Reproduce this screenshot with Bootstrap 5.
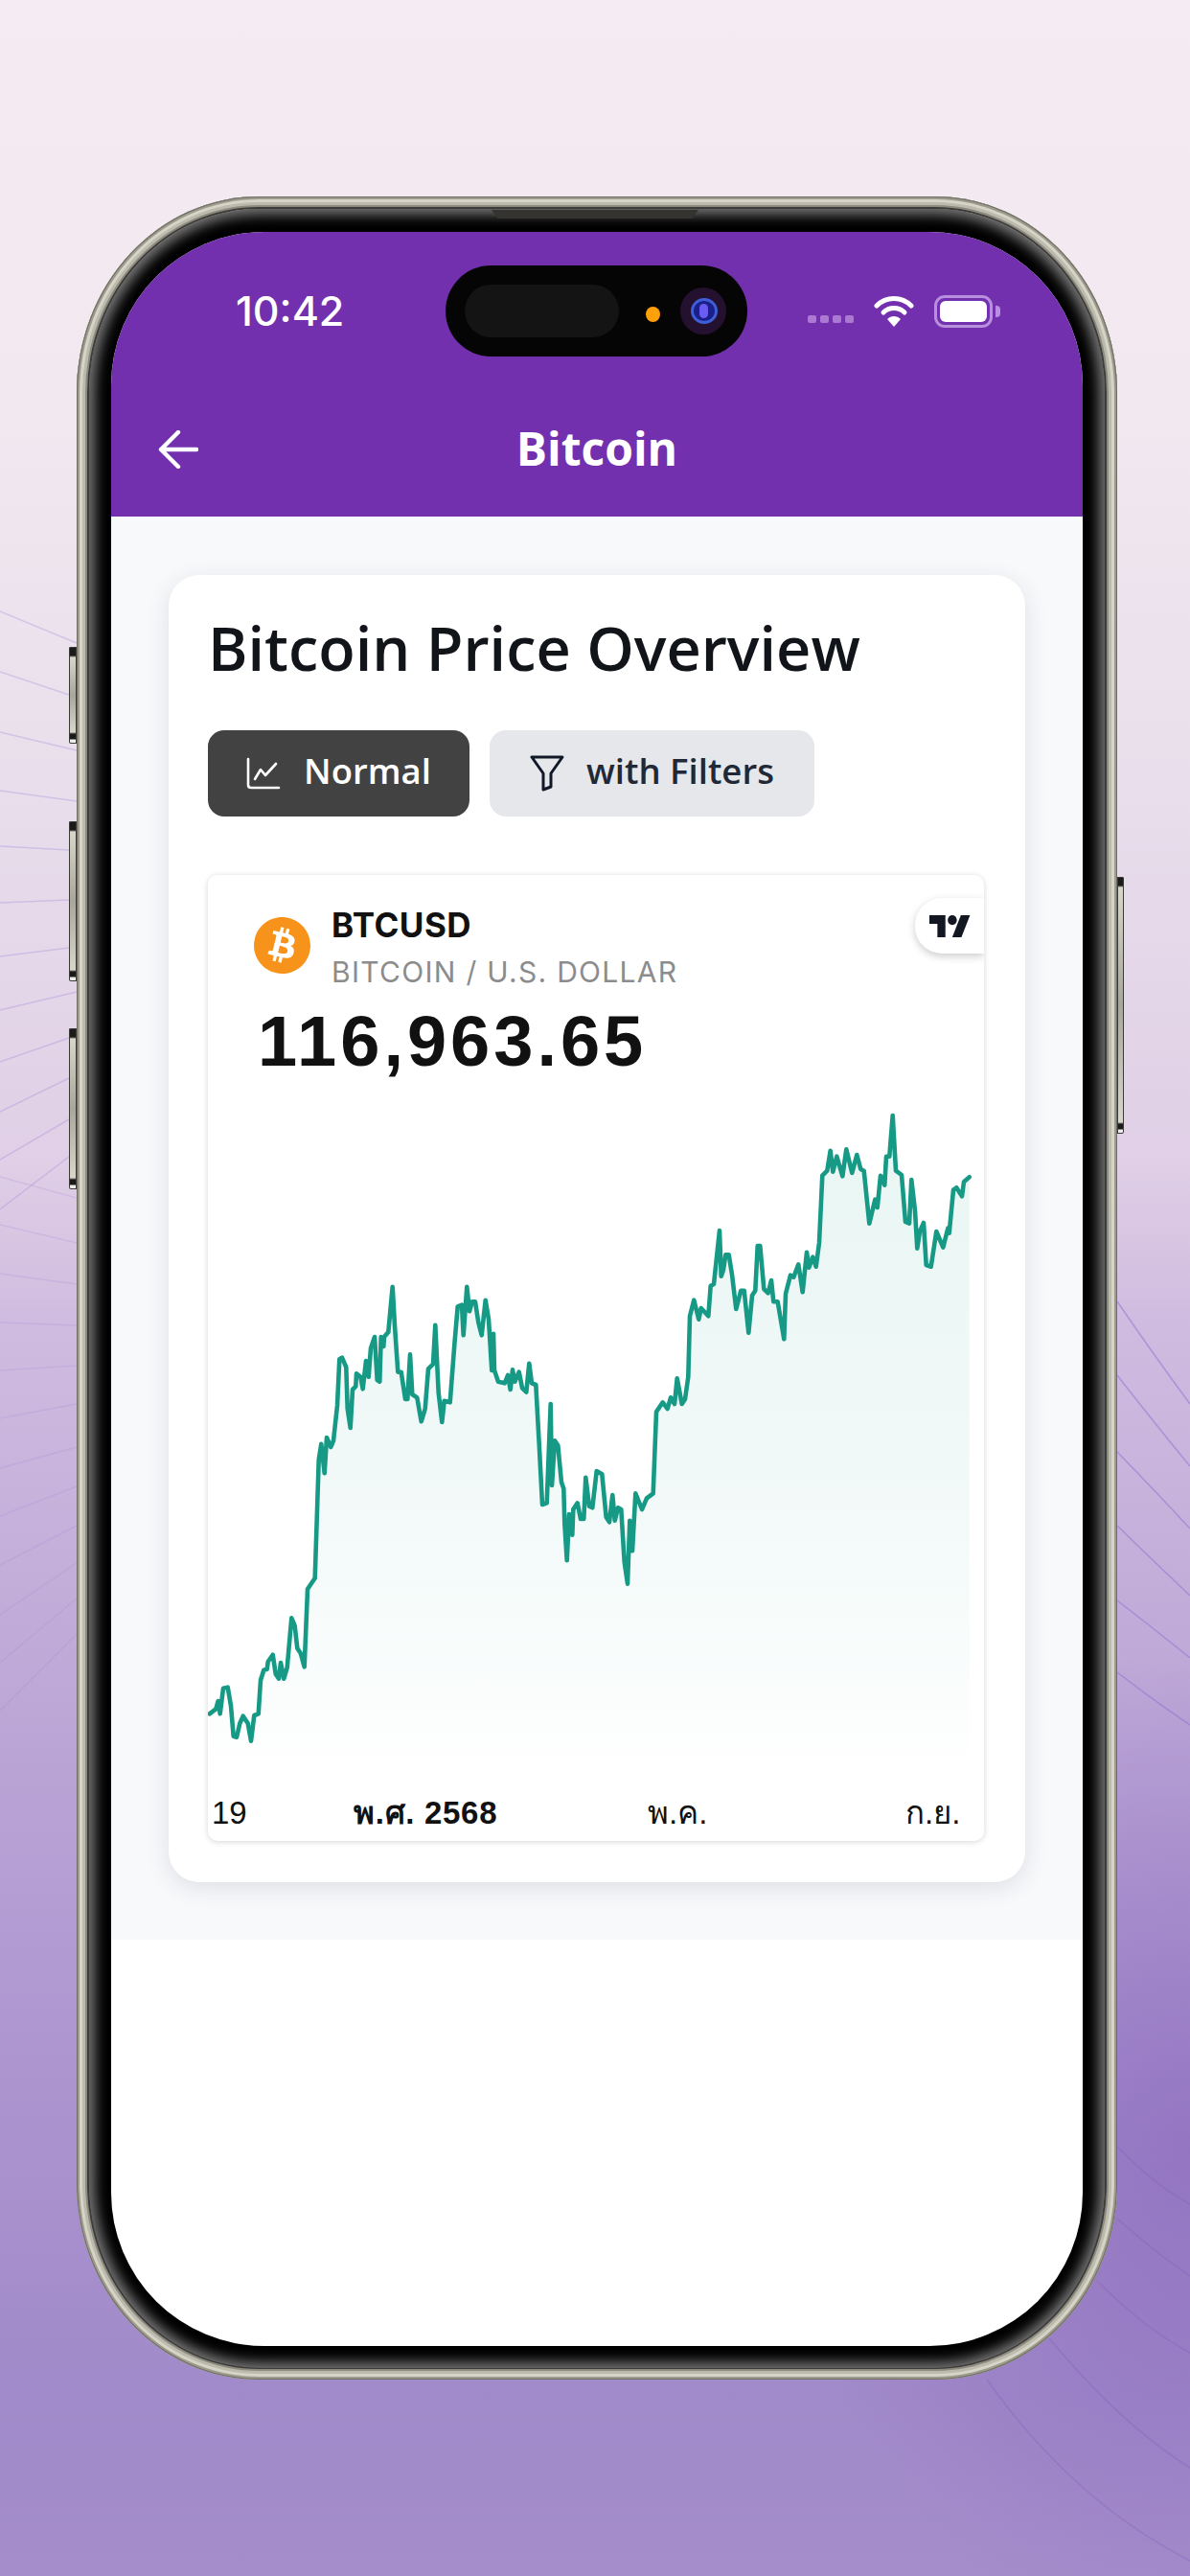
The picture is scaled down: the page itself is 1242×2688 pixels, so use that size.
<!DOCTYPE html>
<html lang="th">
<head>
    <meta charset="UTF-8">
    <meta name="viewport" content="width=device-width, initial-scale=1.0">
    <title>Bitcoin</title>
    <link href="https://cdn.jsdelivr.net/npm/bootstrap@5.3.0/dist/css/bootstrap.min.css" rel="stylesheet">
    <style>
        html, body { margin: 0; width: 1242px; height: 2688px; overflow: hidden; }
        body {
            position: relative;
            font-family: "Open Sans", "Noto Sans", sans-serif;
            background:
                radial-gradient(ellipse 420px 520px at 1242px 2240px, rgba(132, 98, 186, .6), rgba(132, 98, 186, 0)),
                linear-gradient(180deg, #f4ecf2 0%, #f2e9f0 14%, #e9dfec 30%, #e0cfe6 45%, #d0bce0 51%, #b9a3d5 69%, #ab93cf 82%, #a18ac9 93%, #a58dcb 100%);
        }
        .bg-lines { position: absolute; inset: 0; width: 1242px; height: 2688px; }
        .stage { position: relative; padding: 205px 76px 0 80px; }

        /* phone */
        .phone-frame {
            position: relative;
            width: 1086px;
            height: 2278px;
            padding: 13px 13px 12px 13px;
            border-radius: 190px / 205px;
            background: #cfccc0;
            box-shadow: inset 0 0 0 1px #6f6d63, inset 0 0 0 3px #9d9a8e, inset 0 0 0 6px #d6d3c7, inset 0 0 0 9px #bcb9ad, inset 0 0 0 11px #8d8a7f, inset 0 0 0 13px #3c3c3a;
        }
        .phone-bezel {
            position: relative;
            height: 100%;
            padding: 24px 23px 23px 23px;
            background: #000;
            border-radius: 178px / 192px;
            box-shadow: inset 0 0 13px 6px rgba(165, 165, 165, .72);
        }
        .speaker-slot {
            position: absolute;
            top: 1px;
            left: 420px;
            width: 216px;
            height: 9px;
            background: #34332f;
            clip-path: polygon(0 0, 100% 0, 97% 100%, 3% 100%);
        }
        .phone-screen {
            height: 100%;
            background: #fff;
            border-radius: 160px;
            overflow: hidden;
        }
        .side-key {
            position: absolute;
            width: 8px;
            border-radius: 2px 0 0 2px;
            background: linear-gradient(180deg, #1a1a18 0, #1a1a18 9px, #d8d5ca 11px, #a9a69b 50%, #d8d5ca calc(100% - 12px), #1a1a18 calc(100% - 10px), #1a1a18 calc(100% - 5px), #eee calc(100% - 4px));
            box-shadow: inset 0 0 0 1px #3a3a36;
        }
        .key-l1 { left: -8px; top: 470px; height: 101px; }
        .key-l2 { left: -8px; top: 652px; height: 167px; }
        .key-l3 { left: -8px; top: 868px; height: 168px; }
        .key-r1 { right: -7px; width: 7px; top: 710px; height: 268px; border-radius: 0 2px 2px 0; }

        /* app header */
        .app-header { background: #7230ae; color: #fff; padding-top: 35px; height: 297px; }
        .status-row { display: grid; grid-template-columns: 349px 315px 1fr; height: 95px; align-items: center; }
        .status-time { padding-left: 130px; font-family: Inter, "Noto Sans", sans-serif; font-weight: 500; font-size: 43px; line-height: 1; }
        .cam-island { position: relative; height: 95px; background: #050505; border-radius: 48px; }
        .island-pill { position: absolute; left: 20px; top: 20px; width: 161px; height: 55px; border-radius: 28px; background: #141414; }
        .island-dot { position: absolute; left: 209px; top: 43px; width: 15px; height: 16px; border-radius: 50%; background: #ff9f0a; }
        .island-cam { position: absolute; left: 245px; top: 23px; width: 48px; height: 49px; border-radius: 50%; background: #24102f; }
        .island-lens { position: absolute; left: 11px; top: 11px; width: 28px; height: 27px; border-radius: 50%; background: #1b1f8a; border: 3px solid #3f5fd8; }
        .island-lens::after { content: ""; position: absolute; left: 6px; top: 3px; width: 9px; height: 15px; border-radius: 5px; background: #6a5cf0; }
        .status-icons { padding-left: 63px; gap: 21px; }
        .signal-dots { gap: 4px; margin-top: 17px; }
        .signal-dots span { width: 9px; height: 8px; border-radius: 2px; background: #ab79d2; }
        .battery-box { display: block; width: 61px; height: 34px; border: 3px solid #b78fdc; border-radius: 11px; padding: 3px; position: relative; }
        .battery-box span { display: block; height: 100%; background: #fff; border-radius: 6px; }
        .battery-box::after { content: ""; position: absolute; right: -11px; top: 8px; width: 5px; height: 12px; border-radius: 0 4px 4px 0; background: #b78fdc; }
        .nav-row { padding-top: 61px; height: 131px; }
        .nav-back { width: 91px; padding-left: 49px; }
        .nav-arrow { display: block; margin-top: 16px; }
        .nav-title { font-size: 48px; font-weight: 700; line-height: 70px; }

        /* content */
        .app-body { background: #f8f9fb; padding: 61px 60px 60px; }
        .overview-panel {
            height: 1364px;
            padding: 36px 43px 43px 41px;
            border: 0;
            border-radius: 32px;
            background: #fff;
            box-shadow: 0 6px 24px rgba(30, 40, 60, .12);
        }
        .overview-title { margin: 0; font-size: 63px; font-weight: 600; line-height: 80px; color: #111418; }
        .tab-row { margin-top: 46px; gap: 21px; }
        .tab-btn {
            height: 90px;
            padding: 0;
            border: 0;
            border-radius: 17px;
            font-size: 36.5px;
            font-weight: 600;
            line-height: 1;
        }
        .tab-btn span { margin-bottom: 5px; }
        .tab-normal { width: 273px; background: #424242; color: #fff; gap: 24px; }
        .tab-normal:hover { background: #424242; color: #fff; }
        .tab-filter { width: 339px; background: #e5e7eb; color: #1f2937; gap: 23px; }
        .tab-filter:hover { background: #e5e7eb; color: #1f2937; }

        /* tradingview widget */
        .tv-widget {
            position: relative;
            margin-top: 61px;
            height: 1008px;
            padding-top: 32px;
            border: 0;
            border-radius: 10px;
            overflow: hidden;
            background: #fff;
            box-shadow: 0 1px 6px rgba(0, 0, 0, .16);
            font-family: "Liberation Sans", Arial, sans-serif;
        }
        .tv-badge {
            position: absolute;
            top: 24px;
            right: 0;
            width: 72px;
            height: 58px;
            border-radius: 28px 0 0 28px;
            background: #fff;
            box-shadow: 0 3px 8px rgba(0, 0, 0, .2);
        }
        .symbol-row { padding-left: 48px; gap: 22px; }
        .symbol-logo { margin-bottom: 6px; }
        .symbol-name { font-family: Inter, "Liberation Sans", sans-serif; font-size: 35px; font-weight: 700; line-height: 40px; letter-spacing: .5px; color: #111; }
        .symbol-desc { margin-top: 9px; font-family: Inter, "Liberation Sans", sans-serif; font-size: 30px; line-height: 40px; letter-spacing: 1.3px; color: #8c8c8c; }
        .symbol-price { margin: 13px 0 3px; padding-left: 52px; font-size: 74px; font-weight: 700; line-height: 80px; letter-spacing: 4px; color: #111; }
        .price-chart { display: block; width: 810px; height: 791px; }
        .axis-label { font-family: "Liberation Sans", "Noto Sans", sans-serif; font-size: 33px; fill: #111; }
        .axis-year { font-weight: 700; letter-spacing: .7px; }
    </style>
</head>
<body>
    <svg class="bg-lines" viewBox="0 0 1242 2688" fill="none">
        <g stroke="#9a74d8" stroke-opacity=".28" stroke-width="1.5">
            <path d="M0 638 80 671M0 701 72 725M0 764 80 783M0 825 80 836M0 883 72 887M0 942 72 939M0 998 72 989M0 1054 80 1035M0 1108 72 1083M0 1160 72 1125M0 1210 72 1168M0 1262 72 1207"/>
        </g>
        <g stroke="#a884d6" stroke-opacity=".22" stroke-width="1.5">
            <path d="M0 1228 80 1250M0 1278 80 1297M0 1329 80 1340M0 1380 80 1383M0 1430 80 1425M0 1480 80 1465M0 1532 80 1510M0 1582 80 1551M0 1633 80 1592M0 1685 80 1631M0 1735 80 1668M0 1785 80 1705"/>
        </g>
        <g stroke="#8f6cd0" stroke-opacity=".5" stroke-width="1.5">
            <path d="M1166 1358Q1205 1415 1242 1465M1166 1435Q1205 1485 1242 1530M1166 1515Q1205 1555 1242 1595M1166 1592Q1205 1630 1242 1665M1166 1670Q1205 1700 1242 1730M1166 1745Q1205 1775 1242 1800"/>
        </g>
        <g stroke="#7d5ab8" stroke-opacity=".3" stroke-width="1.5">
            <path d="M1166 2240Q1205 2280 1242 2300M1166 2315Q1205 2350 1242 2375M1145 2380Q1195 2430 1242 2455M1095 2440Q1170 2530 1242 2575M1030 2483Q1120 2610 1242 2672"/>
        </g>
    </svg>

    <div class="stage">
        <div class="phone-frame">
            <span class="side-key key-l1"></span>
            <span class="side-key key-l2"></span>
            <span class="side-key key-l3"></span>
            <span class="side-key key-r1"></span>
            <div class="phone-bezel">
                <span class="speaker-slot"></span>
                <div class="phone-screen d-flex flex-column">
                    <header class="app-header">
                        <div class="status-row">
                            <div class="status-time">10:42</div>
                            <div class="cam-island">
                                <span class="island-pill"></span>
                                <span class="island-dot"></span>
                                <span class="island-cam"><span class="island-lens"></span></span>
                            </div>
                            <div class="status-icons d-flex align-items-center">
                                <div class="signal-dots d-flex"><span></span><span></span><span></span><span></span></div>
                                <svg width="42" height="34" viewBox="0 0 42 34" fill="none" stroke="#fff" stroke-width="5" stroke-linecap="round">
                                    <path d="M3 11C13 1 29 1 39 11"/>
                                    <path d="M10 18C16 12 26 12 32 18"/>
                                    <path d="M21 33 14 25C18 21 24 21 28 25Z" fill="#fff" stroke="none"/>
                                </svg>
                                <span class="battery-box"><span></span></span>
                            </div>
                        </div>
                        <div class="nav-row d-flex align-items-start">
                            <div class="nav-back">
                                <svg class="nav-arrow" width="42" height="40" viewBox="0 0 42 40" fill="none" stroke="#fff" stroke-width="4.4" stroke-linecap="round" stroke-linejoin="round">
                                    <path d="M40 20H3M21 2 3 20 21 38"/>
                                </svg>
                            </div>
                            <div class="nav-title flex-grow-1 text-center">Bitcoin</div>
                            <div class="nav-back"></div>
                        </div>
                    </header>

                    <main class="app-body">
                        <section class="overview-panel card">
                            <h1 class="overview-title">Bitcoin Price Overview</h1>
                            <div class="tab-row d-flex">
                                <button type="button" class="tab-btn tab-normal btn d-flex align-items-center justify-content-center">
                                    <svg width="36" height="34" viewBox="0 0 36 34" fill="none" stroke="#fff" stroke-width="2.6" stroke-linecap="round" stroke-linejoin="round">
                                        <path d="M2 2V29Q2 32 5 32H34"/>
                                        <path d="M9 23 15 13 20 19 31 7"/>
                                    </svg>
                                    <span>Normal</span>
                                </button>
                                <button type="button" class="tab-btn tab-filter btn d-flex align-items-center justify-content-center">
                                    <svg width="36" height="38" viewBox="0 0 36 38" fill="none" stroke="#111827" stroke-width="3" stroke-linejoin="round">
                                        <path d="M2 2H34L22 19V33L14 36V19Z"/>
                                    </svg>
                                    <span>with Filters</span>
                                </button>
                            </div>

                            <div class="tv-widget card">
                                <div class="tv-badge d-flex align-items-center justify-content-center">
                                    <svg width="43" height="23" viewBox="0 0 36 18" preserveAspectRatio="none" fill="#131722">
                                        <path d="M14 18H7V7H0V0h14zM28 18h-8l7.5-18h8z"/>
                                        <circle cx="20" cy="4" r="4"/>
                                    </svg>
                                </div>
                                <div class="symbol-row d-flex align-items-center">
                                    <svg class="symbol-logo" width="59" height="59" viewBox="0 0 24 24" fill="#f7931a">
                                        <path d="M23.638 14.904c-1.602 6.43-8.113 10.34-14.542 8.736C2.67 22.05-1.244 15.525.362 9.105 1.962 2.67 8.475-1.243 14.9.358c6.43 1.605 10.342 8.115 8.738 14.548v-.002zm-6.35-4.613c.24-1.59-.974-2.45-2.64-3.03l.54-2.153-1.315-.33-.525 2.107c-.345-.087-.705-.167-1.064-.25l.526-2.127-1.32-.33-.54 2.165c-.285-.067-.565-.132-.84-.2l-1.815-.45-.35 1.407s.975.225.955.236c.535.136.63.486.615.766l-1.477 5.92c-.075.166-.24.406-.614.314.015.02-.96-.24-.96-.24l-.66 1.51 1.71.426.93.242-.54 2.19 1.32.327.54-2.17c.36.1.705.19 1.05.273l-.51 2.154 1.32.33.545-2.19c2.24.427 3.93.257 4.64-1.774.57-1.637-.03-2.58-1.217-3.196.854-.193 1.5-.76 1.68-1.93h.01zm-3.01 4.22c-.404 1.64-3.157.75-4.05.53l.72-2.9c.896.23 3.757.67 3.33 2.37zm.41-4.24c-.37 1.49-2.662.735-3.405.55l.654-2.64c.744.18 3.137.524 2.75 2.084v.006z"/>
                                    </svg>
                                    <div>
                                        <div class="symbol-name">BTCUSD</div>
                                        <div class="symbol-desc">BITCOIN / U.S. DOLLAR</div>
                                    </div>
                                </div>
                                <div class="symbol-price">116,963.65</div>
                                <svg class="price-chart" viewBox="217 1130 810 791">
                                    <defs>
                                        <linearGradient id="areaFade" gradientUnits="userSpaceOnUse" x1="0" y1="1180" x2="0" y2="1860">
                                            <stop offset="0" stop-color="#089981" stop-opacity=".09"/>
                                            <stop offset=".6" stop-color="#089981" stop-opacity=".05"/>
                                            <stop offset="1" stop-color="#089981" stop-opacity="0"/>
                                        </linearGradient>
                                    </defs>
                                    <path id="priceArea" fill="url(#areaFade)"/>
                                    <path id="priceLine" fill="none" stroke="#169a85" stroke-width="4.6" stroke-linejoin="round" stroke-linecap="round"/>
                                    <text class="axis-label" x="221" y="1903">19</text>
                                    <text class="axis-label axis-year" x="369" y="1903">พ.ศ. 2568</text>
                                    <text class="axis-label" x="676" y="1903">พ.ค.</text>
                                    <text class="axis-label" x="945" y="1903">ก.ย.</text>
                                </svg>
                            </div>
                        </section>
                    </main>
                </div>
            </div>
        </div>
    </div>

    <script src="https://cdn.jsdelivr.net/npm/bootstrap@5.3.0/dist/js/bootstrap.bundle.min.js"></script>
    <script>
        // traced price series, in 3x crops: each block has its own origin
        const segments = [
            { x: 217, y: 1300, pts: [5,1465,25,1450,32,1425,38,1465,48,1385,62,1382,72,1440,80,1535,90,1538,100,1495,110,1472,125,1495,135,1550,145,1470,158,1465,165,1360,175,1328,185,1325,188,1302,203,1280,212,1340,222,1355,228,1305,238,1355,248,1320,262,1165,272,1190,280,1260,290,1275,302,1318,312,1075,322,1060,335,1040,343,800,347,670,355,620,365,712,372,600,385,630,393,610,405,500,412,355,420,350,433,380,437,510,446,570,453,450,463,440,465,400,478,410,485,448,495,360,503,410,510,320,522,285,530,420,538,425,542,285,550,315,552,285,565,270,578,128,585,250,595,395,605,395,618,480,625,480,633,340,640,465,655,475,668,550,680,510,690,385,705,370,712,248,722,460,733,552,740,485,758,490,772,310,782,190,795,185,800,280] },
            { x: 480, y: 1300, pts: [22,128,30,205,38,175,48,175,58,240,68,280,80,170,90,230,100,390,105,275,108,390,120,425,140,430,150,405,158,450,165,388,172,425,185,395,195,445,208,458,217,368,225,430,238,435,248,620,258,810,272,805,284,495,288,750,297,610,307,625,318,740,325,760,328,870,335,985,342,840,352,905,355,825,368,805,378,855,388,855,394,725,405,815,415,820,428,705,445,715,458,850,468,865,478,780,485,860,495,820,505,825,515,990,525,1058,532,860,540,955,550,775,570,825,585,790,605,775,615,520,635,490,650,510,660,475,672,495,680,415,695,495,705,480,715,410,720,220,733,170,748,230,755,195,778,220,785,125,795,120] },
            { x: 750, y: 1150, pts: [3,402,8,545,15,525,22,478,32,478,42,540,55,648,70,590,80,590,94,722,105,605,115,590,122,450,130,450,142,585,155,598,165,558,172,625,185,625,205,742,210,600,225,542,235,548,250,508,263,595,276,470,283,518,295,485,305,515,315,440,325,230,340,215,350,152,358,218,370,170,388,232,400,148,418,222,433,165,445,210,455,215,472,380,490,305,497,330,507,230,520,260,525,170,535,170,545,42,555,215,573,228,585,375,597,380,604,243,615,340,622,458,630,405,642,378,650,510,665,515,682,405,703,455,718,395,722,410,735,275,745,268,762,295,768,250,785,235] }
        ];

        const points = [];
        segments.forEach(seg => {
            for (let i = 0; i < seg.pts.length; i += 2) {
                points.push([(seg.x + seg.pts[i] / 3).toFixed(1), (seg.y + seg.pts[i + 1] / 3).toFixed(1)]);
            }
        });

        const line = points.map((p, i) => (i ? 'L' : 'M') + p[0] + ' ' + p[1]).join('');
        document.getElementById('priceLine').setAttribute('d', line);
        document.getElementById('priceArea').setAttribute('d', line + 'L' + points[points.length - 1][0] + ' 1870L' + points[0][0] + ' 1870Z');
    </script>
</body>
</html>
